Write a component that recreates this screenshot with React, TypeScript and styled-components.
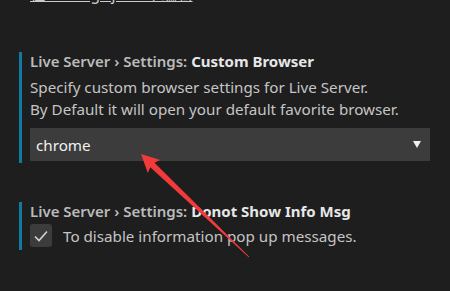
import React from "react";
import styled, { createGlobalStyle } from "styled-components";

const GlobalStyle = createGlobalStyle`
  html, body {
    margin: 0;
    padding: 0;
    background: #1e1e1e;
    overflow: hidden;
  }
  body {
    font-family: "Noto Sans", "Open Sans", "Noto Sans CJK SC", sans-serif;
    -webkit-font-smoothing: antialiased;
  }
`;

const Page = styled.div`
  position: relative;
  width: 450px;
  height: 291px;
  background: #1e1e1e;
  padding-left: 19px;
  box-sizing: border-box;
  overflow: hidden;
`;

const TopLink = styled.a`
  display: block;
  margin-top: -15px;
  margin-left: 11px;
  width: max-content;
  font-size: 15.5px;
  line-height: 18px;
  color: #cccccc;
  text-decoration: underline;
  font-family: "Noto Sans", "Noto Sans CJK SC", sans-serif;
`;

const Setting = styled.section<{ $gap: number; $bottom: number }>`
  margin-top: ${(p) => p.$gap}px;
  border-left: 3px solid #0f7ba3;
  padding-left: 8px;
  padding-bottom: ${(p) => p.$bottom}px;
  width: 400px;
`;

const Title = styled.div`
  font-size: 15px;
  line-height: 18px;
  font-weight: 600;
  color: #bbbbbb;
  white-space: nowrap;
`;

const Key = styled.span`
  color: #e7e7e7;
  font-weight: 700;
`;

const Description = styled.div`
  margin-top: 6px;
  font-size: 15.2px;
  line-height: 22px;
  color: #c5c5c5;
  white-space: nowrap;
`;

const Select = styled.div`
  margin-top: 8px;
  height: 33px;
  background: #3c3c3c;
  display: flex;
  align-items: center;
  justify-content: space-between;
  padding: 0 9px 0 6px;
  box-sizing: border-box;
  color: #f0f0f0;
  font-size: 15.2px;
`;

const Caret = styled.span`
  width: 0;
  height: 0;
  border-left: 4px solid transparent;
  border-right: 4px solid transparent;
  border-top: 7px solid #f0f0f0;
`;

const CheckRow = styled.div`
  margin-top: 4px;
  display: flex;
  align-items: center;
  gap: 11px;
  font-size: 15.2px;
  color: #c5c5c5;
`;

const CheckBox = styled.span`
  width: 22px;
  height: 23px;
  border-radius: 3px;
  background: #3c3c3c;
  display: flex;
  align-items: center;
  justify-content: center;
`;

const Overlay = styled.svg`
  position: absolute;
  left: 0;
  top: 0;
  pointer-events: none;
`;

export default function App() {
  return (
    <>
      <GlobalStyle />
      <Page>
        <TopLink>在 settings.json 中编辑</TopLink>
        <Setting $gap={52 - 3} $bottom={2}>
          <Title>
            Live Server › Settings: <Key>Custom Browser</Key>
          </Title>
          <Description>
            Specify custom browser settings for Live Server.
            <br />
            By Default it will open your default favorite browser.
          </Description>
          <Select>
            <span>chrome</span>
            <Caret />
          </Select>
        </Setting>
        <Setting $gap={39} $bottom={3}>
          <Title>
            Live Server › Settings: <Key>Donot Show Info Msg</Key>
          </Title>
          <CheckRow>
            <CheckBox>
              <svg width="16" height="16" viewBox="0 0 16 16">
                <path d="M2 8.5 L6 12.5 L14 3.5" fill="none" stroke="#d4d4d4" strokeWidth="1.6" />
              </svg>
            </CheckBox>
            To disable information pop up messages.
          </CheckRow>
        </Setting>
        <Overlay width="450" height="291" viewBox="0 0 450 291">
          <polygon
            points="141,154 160.2,160 154.5,162.8 249.3,256.7 248.7,257.3 150.3,167.2 147.8,173"
            fill="#f23a3a"
          />
        </Overlay>
      </Page>
    </>
  );
}
